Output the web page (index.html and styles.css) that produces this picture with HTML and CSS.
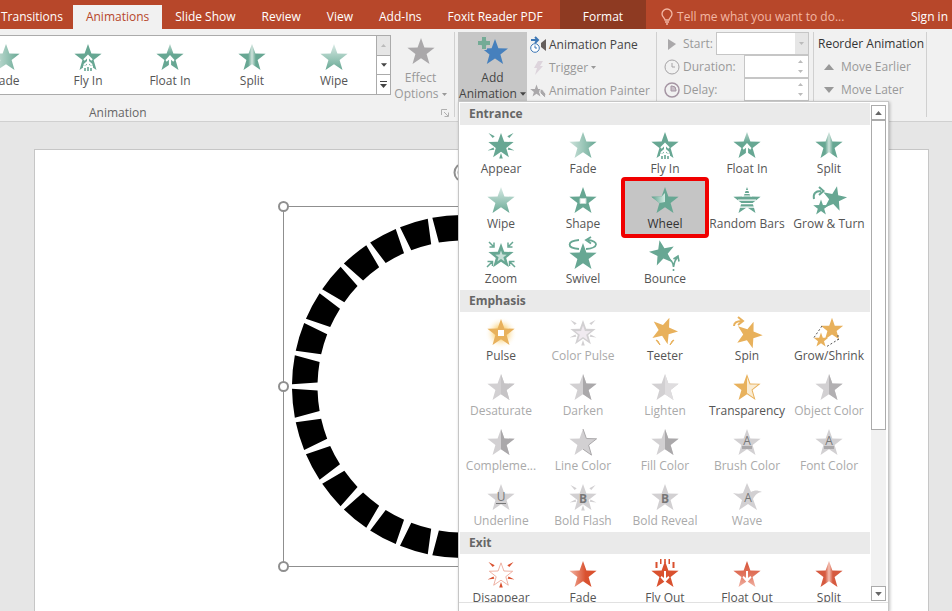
FILE: index.html
```html
<!DOCTYPE html>
<html lang="en">
<head>
  <meta charset="UTF-8">
  <title>Presentation - Animations</title>
  <link rel="stylesheet" href="styles.css">
</head>

<body>

  <!-- shared icon shapes -->
  <svg class="defs" width="0" height="0" aria-hidden="true">
    <defs>
      <linearGradient id="g-fade"><stop offset="0" stop-color="#cfe3dc"/><stop offset=".5" stop-color="#9cc7b9"/><stop offset="1" stop-color="#67a793"/></linearGradient>
      <linearGradient id="g-float" x2="0" y2="1"><stop offset="0" stop-color="#b5d6cb"/><stop offset=".4" stop-color="#67a793"/><stop offset="1" stop-color="#67a793"/></linearGradient>
      <linearGradient id="g-wipe" x2="0" y2="1"><stop offset="0" stop-color="#d9eae5"/><stop offset=".7" stop-color="#8abdad"/><stop offset="1" stop-color="#67a793"/></linearGradient>
      <linearGradient id="g-split"><stop offset=".36" stop-color="#67a793"/><stop offset=".5" stop-color="#cfe3dc"/><stop offset=".64" stop-color="#67a793"/></linearGradient>
      <linearGradient id="g-wheel"><stop offset=".1" stop-color="#67a793"/><stop offset="1" stop-color="#d5ece4"/></linearGradient>
      <linearGradient id="r-fade"><stop offset="0" stop-color="#f3b5a4"/><stop offset=".6" stop-color="#d9512f"/><stop offset="1" stop-color="#d9512f"/></linearGradient>
      <linearGradient id="r-float" x2="0" y2="1"><stop offset="0" stop-color="#d65338"/><stop offset=".5" stop-color="#e0735c"/><stop offset="1" stop-color="#f1b3a5"/></linearGradient>
      <linearGradient id="r-split"><stop offset=".36" stop-color="#d65a40"/><stop offset=".5" stop-color="#f3bfb2"/><stop offset=".64" stop-color="#d65a40"/></linearGradient>
      <radialGradient id="y-glow"><stop offset=".4" stop-color="#fbd98f"/><stop offset="1" stop-color="#fff" stop-opacity="0"/></radialGradient>
    </defs>
    <symbol id="star" viewBox="0 0 28 28"><path d="M14 1l3.400 9.500 10.200.3-8 6.300 2.900 10L14 21.200 5.500 27.100l2.900-10L.4 10.800l10.200-.3z"/></symbol>
    <symbol id="half" viewBox="0 0 28 28"><path d="M14 1l3.400 9.500 10.200.3-8 6.300 2.900 10L14 21.200z"/></symbol>
    <symbol id="rays" viewBox="0 0 28 28"><path d="M1.500 2l4.200 5 2-1.800zM26.500 2l-4.200 5-2-1.800zM.5 19.500l6-3 .8 2.200zM27.500 19.500l-6-3-.8 2.200zM14 22l1.800 5.500h-3.600z"/></symbol>
    <symbol id="fly" viewBox="0 0 28 28"><path fill="none" stroke="#fff" stroke-width="2" d="M14 12.500V24M10 17l4-4 4 4M10 22l4-3.500 4 3.500"/><path fill="#fff" d="M9 22.500h10V30H9z"/><path d="M13.200 24h1.600v5h-1.600zM10.200 25h1.600v4h-1.600zM16.200 25h1.600v4h-1.600z"/></symbol>
    <symbol id="up" viewBox="0 0 28 28"><path fill="#fff" d="M14 12l4.500 5-1.200 1.700-2.200-2V25h-2.200v-8.300l-2.200 2L9.500 17z"/></symbol>
    <symbol id="tri-up" viewBox="0 0 10 6"><path d="M5 0l5 6H0z"/></symbol>
    <symbol id="tri-down" viewBox="0 0 10 6"><path d="M0 0h10L5 6z"/></symbol>
  </svg>

  <nav class="tabs">
    <a href="#">Transitions</a>
    <a href="#" class="active">Animations</a>
    <a href="#">Slide Show</a>
    <a href="#">Review</a>
    <a href="#">View</a>
    <a href="#">Add-Ins</a>
    <a href="#">Foxit Reader PDF</a>
    <a href="#" class="format">Format</a>
    <button class="tell">
      <svg width="12" height="16" viewBox="0 0 12 16"><path d="M4 11c0-2-3-3-3-6a5 5 0 0 1 10 0c0 3-3 4-3 6zM4 13h4M5 15h2" fill="none" stroke="#f3b7a4" stroke-width="1.300"/></svg>
      Tell me what you want to do...
    </button>
    <a href="#" class="signin">Sign in</a>
  </nav>

  <header class="ribbon">
    <section class="group group-animation">
      <div class="group-row">
        <div class="gallery">
          <div class="gallery-items">
            <button class="effect green"><svg class="icon"><use href="#star" fill="url(#g-fade)"/></svg>Fade</button>
            <button class="effect green"><svg class="icon"><use href="#star"/><use href="#fly"/></svg>Fly In</button>
            <button class="effect green"><svg class="icon"><use href="#star" fill="url(#g-float)"/><use href="#up"/></svg>Float In</button>
            <button class="effect green"><svg class="icon"><use href="#star" fill="url(#g-split)"/></svg>Split</button>
            <button class="effect green"><svg class="icon"><use href="#star" fill="url(#g-wipe)"/></svg>Wipe</button>
          </div>
          <div class="gallery-nav">
            <button class="off" aria-label="Row up"><svg width="5" height="3"><use href="#tri-up"/></svg></button>
            <button aria-label="Row down"><svg width="6" height="4"><use href="#tri-down"/></svg></button>
            <button aria-label="More"><svg width="7" height="7" viewBox="0 0 7 7"><path d="M0 0h7v1H0zM0 3h7L3.500 7z"/></svg></button>
          </div>
        </div>
        <button class="big disabled">
          <svg class="icon" viewBox="0 0 28 28"><use href="#star" fill="#aaa8aa"/></svg>
          <span>Effect</span>
          <span>Options <svg width="5" height="3"><use href="#tri-down"/></svg></span>
        </button>
      </div>
      <div class="group-name">
        <span>Animation</span>
        <button class="launcher" aria-label="Animation settings"><svg width="8" height="8" viewBox="0 0 8 8"><path d="M.5 6V.5H6M3 3l4 4M7.500 3.500v4h-4" fill="none" stroke="#b0b0b0"/></svg></button>
      </div>
    </section>

    <section class="group group-advanced">
      <div class="add-wrap">
        <button class="big pressed">
          <svg class="icon" viewBox="0 0 28 28"><path fill="#4680bd" d="M16 2l3.400 9.200 9.600.3-7.600 6 2.700 9.500-8.100-5.500-8.200 5.500 2.700-9.500-7.500-6 9.600-.3z"/><path fill="#74ab96" stroke="#c6c6c6" d="M2.500-.5h5v4h4v5h-4v4h-5v-4h-4v-5h4z"/></svg>
          <span>Add</span>
          <span>Animation <svg width="6" height="4"><use href="#tri-down"/></svg></span>
        </button>

        <div class="menu">
          <div class="menu-body">
            <div class="menu-list">
              <h2>Entrance</h2>
              <div class="effects green">
                <button class="effect"><svg class="icon"><use href="#star" x="1" y="1" width="26" height="26"/><use href="#rays"/></svg>Appear</button>
                <button class="effect"><svg class="icon"><use href="#star" fill="url(#g-fade)"/></svg>Fade</button>
                <button class="effect"><svg class="icon"><use href="#star"/><use href="#fly"/></svg>Fly In</button>
                <button class="effect"><svg class="icon"><use href="#star" fill="url(#g-float)"/><use href="#up"/></svg>Float In</button>
                <button class="effect"><svg class="icon"><use href="#star" fill="url(#g-split)"/></svg>Split</button>
                <button class="effect"><svg class="icon"><use href="#star" fill="url(#g-wipe)"/></svg>Wipe</button>
                <button class="effect"><svg class="icon"><use href="#star"/><path d="M11 12.500h6v5h-6z" fill="#fff" stroke="#c5ddd5"/></svg>Shape</button>
                <button class="effect selected"><svg class="icon"><use href="#star"/><path d="M14 7v9l-5.500 1L.4 10.800l10.200-.3z" fill="url(#g-wheel)"/></svg>Wheel</button>
                <button class="effect"><svg class="icon"><use href="#star"/><path d="M10 4h8v1h-8zM10 7h8v1h-8zM9 9.500h10v1H9zM5 13.500h18v1.200H5zM5 17h18v1.200H5zM5 20.500h18v1.200H5z" fill="#fff"/></svg>Random Bars</button>
                <button class="effect"><svg class="icon"><g transform="rotate(12 19 12)"><use href="#star" x="7" y="-1" width="25" height="25"/></g><use href="#star" x="-2" y="13" width="16" height="16"/><path d="M-1 13c-1-5 1-8 7-8M4 1l4.500 4L4 9" fill="none" stroke="#67a793" stroke-width="2"/></svg>Grow &amp; Turn</button>
                <button class="effect"><svg class="icon"><use href="#star" x="1" y="1" width="26" height="26"/><use href="#star" x="8" y="9" width="12" height="12" fill="#c8e0d8"/><path d="M2 1l4 4M2.500 6H7V1.500M26 1l-4 4M25.500 6H21V1.500M0 26l5-5M.5 20.500H5.500V25M28 26l-5-5M27.500 20.500h-5V25" fill="none" stroke="#67a793" stroke-width="1.500"/></svg>Zoom</button>
                <button class="effect"><svg class="icon"><use href="#star" y="1"/><path d="M10 8C-3 7-2 0 10-1M17 8C30 7 30 0 19-1M22-4l-5 3 5 3.500" fill="none" stroke="#67a793" stroke-width="1.800"/></svg>Swivel</button>
                <button class="effect"><svg class="icon"><g transform="rotate(-12 11 11)"><use href="#star" x="-2" y="-2" width="26" height="26"/></g><path d="M16 18c4 0 6 3 6.500 8 .5-5 1.500-7 4.500-11M22.500 18l4.500-3 1 5.500M22.500 28v2" fill="none" stroke="#67a793" stroke-width="1.600"/></svg>Bounce</button>
              </div>

              <h2>Emphasis</h2>
              <div class="effects yellow">
                <button class="effect"><svg class="icon"><circle cx="14" cy="15" r="16" fill="url(#y-glow)"/><use href="#star"/><path d="M11 12h6v6h-6z" fill="#fff"/></svg>Pulse</button>
                <button class="effect" disabled><svg class="icon"><use href="#rays"/><use href="#star" x="1" y="1" width="26" height="26"/><use href="#star" x="6" y="7" width="16" height="16" fill="#f0eaf0"/></svg>Color Pulse</button>
                <button class="effect"><svg class="icon"><g transform="rotate(22 14 12)"><use href="#star" y="-2" width="27" height="27"/></g><path d="M5 22l2 1 2 4zM23 22l-2 1-2 4z" stroke="#e8b15c"/></svg>Teeter</button>
                <button class="effect"><svg class="icon"><g transform="rotate(20 16 15)"><use href="#star" x="3" y="2" width="27" height="27"/></g><path d="M1 8c0-4 3-5 8-5M5-1l5 4-5 4" fill="none" stroke="#e8b15c" stroke-width="2"/></svg>Spin</button>
                <button class="effect"><svg class="icon"><use href="#star" x="5" y="-1" width="24" height="23"/><use href="#star" x="-2" y="14" width="16" height="15"/><path d="M7 8l-9 13M24 21l-13 8M23 17v5" fill="none" stroke="#555" stroke-dasharray="2 2"/></svg>Grow/Shrink</button>
                <button class="effect" disabled><svg class="icon"><use href="#star"/><use href="#half" fill="#c6c4c6"/></svg>Desaturate</button>
                <button class="effect" disabled><svg class="icon"><use href="#star"/><use href="#half" fill="#aaa8aa"/></svg>Darken</button>
                <button class="effect" disabled><svg class="icon"><use href="#star"/><use href="#half" fill="#dfdddf"/></svg>Lighten</button>
                <button class="effect"><svg class="icon"><use href="#star"/><path d="M14 4l2.700 7.400 8.300.2-6.500 5.100 2.300 8-6.800-4.700z" fill="#faecd3"/></svg>Transparency</button>
                <button class="effect" disabled><svg class="icon"><use href="#star"/><use href="#half" fill="#b2b0b2"/></svg>Object Color</button>
                <button class="effect" disabled><svg class="icon"><use href="#star"/><use href="#half" fill="#aaa8aa"/></svg>Compleme...</button>
                <button class="effect" disabled><svg class="icon"><use href="#star"/><path d="M14 1l3.400 9.500 10.200.3-8 6.300 2.900 10L14 21.200" fill="none" stroke="#aaa8aa"/></svg>Line Color</button>
                <button class="effect" disabled><svg class="icon"><use href="#star"/><use href="#half" fill="#aaa8aa"/></svg>Fill Color</button>
                <button class="effect" disabled><svg class="icon"><use href="#star"/><text x="14" y="17">A</text><path d="M9 18h10v3H9z" fill="#aaa8aa"/></svg>Brush Color</button>
                <button class="effect" disabled><svg class="icon"><use href="#star"/><text x="14" y="17">A</text><path d="M9 18h10v3H9z" fill="#aaa8aa"/></svg>Font Color</button>
                <button class="effect" disabled><svg class="icon"><use href="#star"/><text x="14" y="18">U</text><path d="M9 20h10v1H9z" fill="#777"/></svg>Underline</button>
                <button class="effect" disabled><svg class="icon"><use href="#rays"/><use href="#star"/><text class="b" x="14" y="20">B</text></svg>Bold Flash</button>
                <button class="effect" disabled><svg class="icon"><use href="#star"/><text class="b" x="14" y="20">B</text></svg>Bold Reveal</button>
                <button class="effect" disabled><svg class="icon"><path d="M14 0l4 9c4-2 6-2 11 0-4 0-7 3-9 7l4 11-9-6-9 6 3-10-9-7c4 1 7 1 10 0z"/><text x="15" y="19">A</text></svg>Wave</button>
              </div>

              <h2>Exit</h2>
              <div class="effects red">
                <button class="effect"><svg class="icon"><use href="#star" x="2" y="2" width="24" height="24" fill="#fff" stroke="#eba595"/><use href="#rays"/></svg>Disappear</button>
                <button class="effect"><svg class="icon"><use href="#star" fill="url(#r-fade)"/></svg>Fade</button>
                <button class="effect"><svg class="icon"><use href="#star"/><path d="M13 11h2v7l2.500-2 1 1.500-4.500 5-4.500-5 1-1.500 2.500 2z" fill="#fff"/><path d="M4.500 2h2v6h-2zM9-1h1.500v5H9zM13.200-1h1.600v4h-1.600zM17.500-1H19v5h-1.500zM21.500 2h2v6h-2z"/></svg>Fly Out</button>
                <button class="effect"><svg class="icon"><use href="#star" fill="url(#r-float)"/><path d="M13 11h2v7l2.500-2 1 1.500-4.500 5-4.500-5 1-1.500 2.500 2z" fill="#fff"/></svg>Float Out</button>
                <button class="effect"><svg class="icon"><use href="#star" fill="url(#r-split)"/></svg>Split</button>
              </div>
            </div>
            <div class="scrollbar">
              <button aria-label="Scroll up"><svg width="7" height="4"><use href="#tri-up"/></svg></button>
              <div class="thumb"></div>
              <button aria-label="Scroll down"><svg width="7" height="4"><use href="#tri-down"/></svg></button>
            </div>
          </div>
          <div class="menu-more"></div>
        </div>
      </div>

      <div class="stack">
        <button><svg width="17" height="16" viewBox="0 0 17 16"><path d="M1 3h6M5 0l3 3-3 3" fill="none" stroke="#3d77b5" stroke-width="2"/><circle cx="5" cy="11" r="4.300" fill="#fff" stroke="#3d77b5"/><path d="M5 8.500V11h2" fill="none" stroke="#3d77b5"/><path d="M16 2v12l-5-4V6z" fill="#665f5c"/></svg>Animation Pane</button>
        <button disabled><svg width="17" height="16" viewBox="0 0 17 16"><path d="M8 1h5l-3 5h3l-8 9 2-7H4z" fill="#ddd4dc"/></svg>Trigger<svg class="caret" width="5" height="3"><use href="#tri-down"/></svg></button>
        <button disabled><svg width="17" height="16" viewBox="0 0 17 16"><use href="#star" width="13" height="13" y="1" fill="#aaa8aa"/><path d="M10 7l2-1 4 5-1 4-5-5z" fill="#aaa8aa" stroke="#f1f1f1"/></svg>Animation Painter</button>
      </div>
    </section>

    <section class="group group-timing">
      <div class="timing">
        <div class="field">
          <svg width="16" height="16" viewBox="0 0 16 16"><path d="M4 3l8 5-8 6z" fill="#aaa8aa"/></svg>
          <label for="start">Start:</label>
          <span class="combo">
            <select id="start" disabled><option></option></select>
            <span class="combo-arrow"><svg width="5" height="3"><use href="#tri-down"/></svg></span>
          </span>
        </div>
        <div class="field">
          <svg width="16" height="16" viewBox="0 0 16 16"><path d="M8 4v4h3" fill="none" stroke="#a5a3a5"/><circle cx="8" cy="8" r="7" fill="none" stroke="#a5a3a5"/></svg>
          <label for="duration">Duration:</label>
          <span class="spin">
            <input id="duration" type="text" disabled>
            <span class="spin-arrows"><svg width="5" height="3"><use href="#tri-up"/></svg><svg width="5" height="3"><use href="#tri-down"/></svg></span>
          </span>
        </div>
        <div class="field">
          <svg width="16" height="16" viewBox="0 0 16 16"><circle cx="8" cy="8" r="7" fill="none" stroke="#a595a3" stroke-width="1.500"/><path d="M7 4h1a4 4 0 0 1 4 4v1H7z" fill="#c8bfc7" stroke="#a595a3"/></svg>
          <label for="delay">Delay:</label>
          <span class="spin">
            <input id="delay" type="text" disabled>
            <span class="spin-arrows"><svg width="5" height="3"><use href="#tri-up"/></svg><svg width="5" height="3"><use href="#tri-down"/></svg></span>
          </span>
        </div>
      </div>
      <div class="reorder">
        <span>Reorder Animation</span>
        <button disabled><svg width="10" height="6"><use href="#tri-up"/></svg>Move Earlier</button>
        <button disabled><svg width="10" height="6"><use href="#tri-down"/></svg>Move Later</button>
      </div>
    </section>
  </header>

  <main class="workspace">
    <div class="slide">
      <svg class="shape" width="381" height="420" viewBox="-190.5 -227.5 381 420">
        <defs>
          <path id="seg" transform="rotate(5.625)" d="M170.900-14.500A171.500 171.500 0 0 1 170.900 14.500L145.600 10.400A146 146 0 0 0 145.600-10.400z"/>
          <g id="quarter">
            <use href="#seg"/>
            <use href="#seg" transform="rotate(11.25)"/>
            <use href="#seg" transform="rotate(22.5)"/>
            <use href="#seg" transform="rotate(33.75)"/>
            <use href="#seg" transform="rotate(45)"/>
            <use href="#seg" transform="rotate(56.25)"/>
            <use href="#seg" transform="rotate(67.5)"/>
            <use href="#seg" transform="rotate(78.75)"/>
          </g>
        </defs>
        <use href="#quarter"/>
        <use href="#quarter" transform="rotate(90)"/>
        <use href="#quarter" transform="rotate(180)"/>
        <use href="#quarter" transform="rotate(270)"/>
        <!-- selection frame and handles -->
        <g class="frame">
          <rect x="-180" y="-180" width="360" height="360"/>
          <circle cx="-180" cy="-180" r="4.500"/>
          <circle cx="-180" cy="0" r="4.500"/>
          <circle cx="-180" cy="180" r="4.500"/>
          <circle cx="180" cy="-180" r="4.500"/>
          <circle cx="180" cy="0" r="4.500"/>
          <circle cx="180" cy="180" r="4.500"/>
          <circle cx="0" cy="-214" r="9"/>
          <circle cx="0" cy="-214" r="5"/>
        </g>
      </svg>
    </div>
  </main>

</body>
</html>
```
FILE: styles.css
```css
* {
  box-sizing: border-box;
}

body {
  margin: 0;
  height: 100vh;
  display: flex;
  flex-direction: column;
  overflow: hidden;
  font-family: "Open Sans", "Noto Sans", sans-serif;
  font-size: 12px;
  line-height: 16px;
  color: #444;
  background-color: #e6e6e6;
}

button, input, select {
  font: inherit;
  color: inherit;
  background: none;
  border: none;
  padding: 0;
  margin: 0;
  white-space: nowrap;
}

svg {
  flex: none;
  fill: currentColor;
  overflow: visible;
}

.defs {
  position: absolute;
}

/* tabs */
.tabs {
  flex: none;
  display: flex;
  align-items: flex-end;
  height: 29px;
  background-color: #b7472a;
}

.tabs a {
  padding: 4px 13px;
  color: #fff;
  text-decoration: none;
  white-space: nowrap;
}

.tabs a:first-child {
  padding: 4px 10px 4px 1px;
}

.tabs .active {
  color: #b7472a;
  background-color: #f1f1f1;
}

.tabs .format {
  align-self: stretch;
  margin-left: 4px;
  padding: 9px 23px 4px;
  background-color: #8e3a22;
}

.tell {
  display: flex;
  align-items: center;
  gap: 4px;
  padding: 4px 15px;
  color: #f3b7a4;
}

.tabs .signin {
  margin-left: auto;
  padding-right: 4px;
}

/* ribbon */
.ribbon {
  flex: none;
  display: flex;
  height: 93px;
  padding-top: 3px;
  background-color: #f1f1f1;
  border-bottom: 1px solid #d0d0d0;
}

.group {
  display: flex;
}

.group-animation {
  flex-direction: column;
  width: 455px;
  margin-bottom: 4px;
  border-right: 1px solid #d0d0d0;
}

.group-row {
  display: flex;
  gap: 4px;
}

.gallery {
  display: flex;
  width: 391px;
  height: 60px;
  margin-top: 3px;
  background-color: #fff;
  border: 1px solid #ababab;
  border-left: none;
}

.gallery-items {
  display: flex;
  flex: 1;
  justify-content: flex-end;
  padding: 1px 1px 0 0;
  overflow: hidden;
}

.gallery-nav {
  display: flex;
  flex-direction: column;
  width: 14px;
  border-left: 1px solid #ababab;
}

.gallery-nav button {
  flex: 1;
  display: flex;
  align-items: center;
  justify-content: center;
}

.gallery-nav button + button {
  border-top: 1px solid #ababab;
}

.gallery-nav .off {
  color: #bbb;
  background-color: #e6e6e6;
}

.effect {
  flex: none;
  display: flex;
  flex-direction: column;
  align-items: center;
  gap: 2px;
  width: 82px;
  height: 55px;
  padding-top: 6px;
  color: #555;
}

.icon {
  width: 28px;
  height: 28px;
}

.green .icon { fill: #67a793; }
.yellow .icon { fill: #e8b15c; }
.red .icon { fill: #d9512f; }

.effect:disabled { color: #aaa; }
.effect:disabled .icon { fill: #d2d0d2; }

.icon text {
  font-size: 12px;
  text-anchor: middle;
  fill: #777;
}

.icon .b {
  font-weight: bold;
}

.big {
  display: flex;
  flex-direction: column;
  align-items: center;
  width: 51px;
  height: 70px;
  padding-top: 5px;
}

.big .icon {
  margin-bottom: 5px;
}

.big svg:not(.icon) {
  vertical-align: 2px;
}

.disabled {
  color: #999;
}

.group-name {
  display: flex;
  justify-content: space-between;
  padding: 3px 5px 0 89px;
  color: #666;
}

.group-advanced {
  width: 199px;
  margin: 0 0 20px 3px;
}

.group-advanced,
.timing {
  border-right: 1px solid #d0d0d0;
}

.add-wrap {
  position: relative;
}

.pressed {
  width: 69px;
  background-color: #c6c6c6;
}

.stack {
  display: flex;
  flex-direction: column;
  padding: 1px 0 0 3px;
}

.stack button,
.reorder button {
  flex: none;
  display: flex;
  align-items: center;
  gap: 2px;
  height: 23px;
}

.stack button:disabled,
.reorder button:disabled,
.field {
  color: #999;
}

.stack .caret {
  margin-left: 1px;
}

.group-timing {
  margin-bottom: 4px;
  border-right: 1px solid #d0d0d0;
}

.timing {
  width: 157px;
  margin-bottom: 16px;
  padding: 0 4px 0 7px;
}

.field {
  display: flex;
  align-items: center;
  gap: 3px;
  height: 23px;
}

.combo,
.spin {
  display: flex;
  height: 23px;
  margin-left: auto;
  background-color: #fff;
  border: 1px solid #c6c6c6;
}

.combo {
  width: 95px;
}

.combo select {
  flex: 1;
  appearance: none;
}

.combo-arrow {
  display: flex;
  align-items: center;
  justify-content: center;
  width: 13px;
  background-color: #e6e6e6;
  color: #bbb;
}

.spin {
  width: 65px;
}

.spin input {
  flex: 1;
  min-width: 0;
}

.spin-arrows {
  display: flex;
  flex-direction: column;
  justify-content: space-around;
  align-items: center;
  width: 16px;
  color: #bbb;
}

.reorder {
  width: 112px;
  padding: 0 4px;
  white-space: nowrap;
}

.reorder span {
  display: block;
  padding: 4px 0 3px;
  color: #333;
}

.reorder button {
  gap: 7px;
  padding-left: 6px;
}

/* add animation menu */
.menu {
  position: absolute;
  z-index: 2;
  top: 69px;
  left: 0;
  display: flex;
  flex-direction: column;
  width: 431px;
  height: calc(100vh - 101px);
  background-color: #fff;
  border: 1px solid #c6c6c6;
  border-bottom: none;
  box-shadow: 1px 1px 3px rgba(0, 0, 0, 0.25);
}

.menu-body {
  flex: 1;
  min-height: 0;
  display: flex;
  justify-content: space-between;
  padding: 1px 2px 0 1px;
}

.menu-list {
  width: 410px;
  overflow: hidden;
}

.menu h2 {
  margin: 0;
  padding: 3px 9px;
  font-size: 12px;
  line-height: 16px;
  color: #666;
  background-color: #eaeaea;
}

.effects {
  display: grid;
  grid-template-columns: repeat(5, 82px);
}

.menu .selected {
  color: #333;
  background-color: #c5c5c5;
  border-radius: 1px;
  outline: 4px solid #f00000;
  outline-offset: -1px;
  z-index: 1;
}

.scrollbar {
  display: flex;
  flex-direction: column;
  justify-content: space-between;
  width: 15px;
  margin: 2px 0 1px;
  background-color: #f1f1f1;
}

.scrollbar button {
  display: flex;
  align-items: center;
  justify-content: center;
  height: 15px;
  color: #666;
  background-color: #fff;
  border: 1px solid #ababab;
}

.scrollbar .thumb {
  height: 310px;
  margin-bottom: auto;
  background-color: #fff;
  border: 1px solid #ababab;
}

.menu-more {
  flex: none;
  height: 9px;
  border-top: 1px solid #e1e1e1;
}

/* slide */
.workspace {
  flex: 1;
  display: flex;
  padding: 27px 23px 0 34px;
  overflow: hidden;
}

.slide {
  flex: 1;
  padding: 9px 0 0 238px;
  background-color: #fff;
  border: 1px solid #c6c6c6;
  border-bottom: none;
}

.shape {
  fill: #000;
}

.frame {
  fill: none;
  stroke: #8f8f8f;
}

.frame circle {
  fill: #fff;
  stroke-width: 2px;
}
```
